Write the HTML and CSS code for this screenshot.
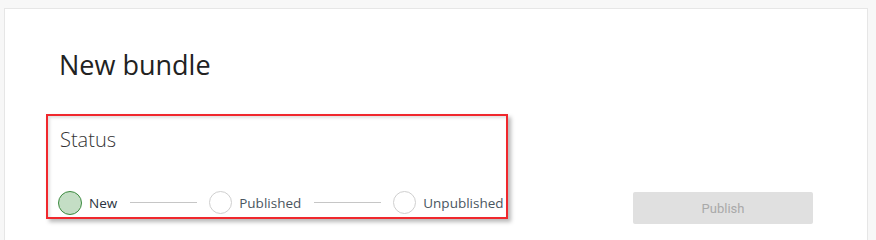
FILE: index.html
```html
<!DOCTYPE html>
<html lang="en">
<head>
<meta charset="utf-8">
<title>New bundle</title>
<link rel="stylesheet" href="styles.css">
</head>
<body>
<main class="card">
  <h1 class="title">New bundle</h1>
  <div class="row">
    <section class="status-box">
      <h2 class="status-title">Status</h2>
      <div class="steps">
        <div class="step step-active"><span class="dot"></span><span class="label">New</span></div>
        <span class="connector"></span>
        <div class="step"><span class="dot"></span><span class="label">Published</span></div>
        <span class="connector"></span>
        <div class="step"><span class="dot"></span><span class="label">Unpublished</span></div>
      </div>
    </section>
    <button class="publish" type="button" disabled>Publish</button>
  </div>
</main>
</body>
</html>
```
FILE: styles.css
```css
html, body {
  margin: 0;
  padding: 0;
  height: 100%;
}
body {
  background: #f7f7f7;
  font-family: "Open Sans", "Noto Sans", sans-serif;
  color: #333;
  overflow: hidden;
}
.card {
  box-sizing: border-box;
  margin: 8px 8px 0 4px;
  width: 864px;
  height: calc(100% - 8px);
  background: #fff;
  border: 1px solid #e6e6e6;
  border-bottom: none;
  padding: 38px 54px 0 41px;
}
.title {
  margin: 0 0 0 13px;
  font-size: 27px;
  line-height: 36px;
  font-weight: 400;
  color: #222;
}
.row {
  display: flex;
  align-items: flex-end;
  justify-content: space-between;
  margin-top: 31px;
}
.status-box {
  border: 2px solid #f0282d;
  padding: 9px 2px 3px 10px;
  box-shadow: 3px 3px 4px rgba(0, 0, 0, 0.28), inset 2px 2px 3px rgba(0, 0, 0, 0.12);
  margin-bottom: 5px;
}
.status-title {
  margin: 0 0 37px 2px;
  font-size: 20px;
  line-height: 29px;
  font-weight: 300;
  color: #333;
}
.steps {
  display: flex;
  align-items: center;
  height: 23px;
}
.step {
  display: flex;
  align-items: center;
  gap: 7px;
}
.dot {
  box-sizing: border-box;
  width: 23px;
  height: 23px;
  border-radius: 50%;
  border: 1px solid #cfcfcf;
  background: #fff;
}
.step-active .dot {
  width: 24px;
  height: 24px;
  border: 1.5px solid #3d8b40;
  background: #c4dec5;
}
.label {
  font-family: "Open Sans", "Noto Sans", sans-serif;
  font-size: 13.5px;
  line-height: 20px;
  color: #4a5560;
}
.step-active .label {
  color: #2a3340;
}
.connector {
  width: 67px;
  height: 1px;
  background: #c6c6c6;
  margin: 0 12px 0 13px;
}
.publish {
  width: 180px;
  height: 32px;
  border: none;
  border-radius: 2px;
  background: #e0e0e0;
  color: #a9a9a9;
  font-family: Roboto, "Liberation Sans", sans-serif;
  font-size: 13px;
  padding: 0;
}
```
